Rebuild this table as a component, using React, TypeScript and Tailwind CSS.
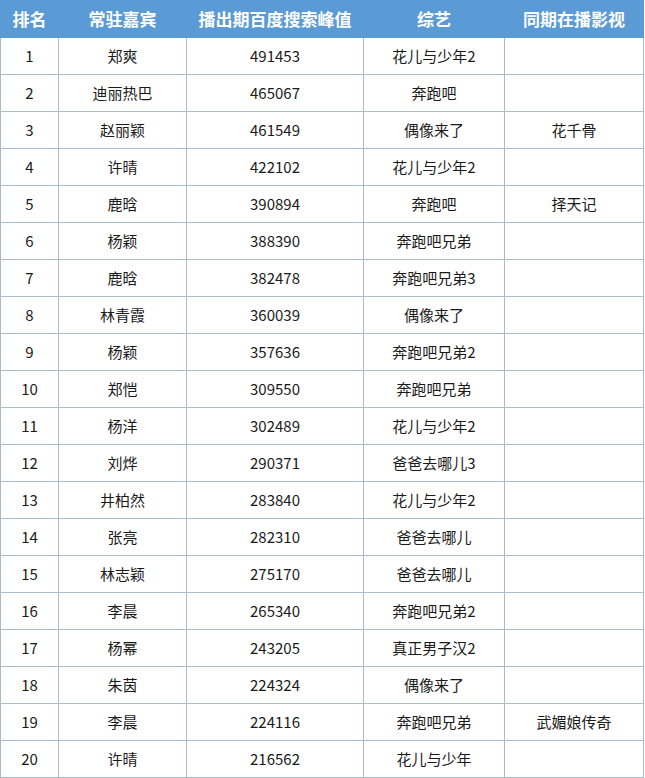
const rows: [number, string, string, string, string][] = [
  [1, '郑爽', '491453', '花儿与少年2', ''],
  [2, '迪丽热巴', '465067', '奔跑吧', ''],
  [3, '赵丽颖', '461549', '偶像来了', '花千骨'],
  [4, '许晴', '422102', '花儿与少年2', ''],
  [5, '鹿晗', '390894', '奔跑吧', '择天记'],
  [6, '杨颖', '388390', '奔跑吧兄弟', ''],
  [7, '鹿晗', '382478', '奔跑吧兄弟3', ''],
  [8, '林青霞', '360039', '偶像来了', ''],
  [9, '杨颖', '357636', '奔跑吧兄弟2', ''],
  [10, '郑恺', '309550', '奔跑吧兄弟', ''],
  [11, '杨洋', '302489', '花儿与少年2', ''],
  [12, '刘烨', '290371', '爸爸去哪儿3', ''],
  [13, '井柏然', '283840', '花儿与少年2', ''],
  [14, '张亮', '282310', '爸爸去哪儿', ''],
  [15, '林志颖', '275170', '爸爸去哪儿', ''],
  [16, '李晨', '265340', '奔跑吧兄弟2', ''],
  [17, '杨幂', '243205', '真正男子汉2', ''],
  [18, '朱茵', '224324', '偶像来了', ''],
  [19, '李晨', '224116', '奔跑吧兄弟', '武媚娘传奇'],
  [20, '许晴', '216562', '花儿与少年', ''],
];

const headers = ['排名', '常驻嘉宾', '播出期百度搜索峰值', '综艺', '同期在播影视'];
const widths = ['w-[58px]', 'w-[128px]', 'w-[177px]', 'w-[141px]', 'w-[139px]'];

export default function App() {
  return (
    <div className="w-[645px] h-[778px] bg-white font-['Noto_Sans_CJK_SC','Noto_Sans',sans-serif]">
      <table className="w-[644px] table-fixed border-collapse">
        <thead>
          <tr>
            {headers.map((h, i) => (
              <th
                key={h}
                className={`${widths[i]} h-[37px] bg-[#5b9bd5] border border-[#5b9bd5] text-white text-[17px] font-bold text-center p-0`}
              >
                {h}
              </th>
            ))}
          </tr>
        </thead>
        <tbody>
          {rows.map((r) => (
            <tr key={r[0]}>
              {r.map((c, i) => (
                <td
                  key={i}
                  className="h-[37px] border border-[#a7bccc] text-[15px] text-[#1a1a1a] text-center p-0"
                >
                  {c}
                </td>
              ))}
            </tr>
          ))}
        </tbody>
      </table>
    </div>
  );
}
